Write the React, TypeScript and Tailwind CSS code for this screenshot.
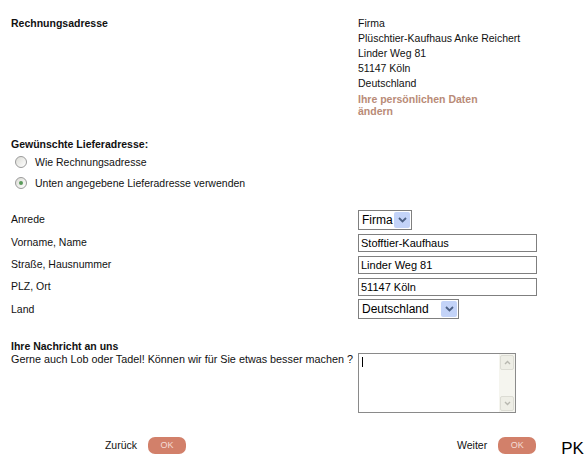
import React from "react";

const font = { fontFamily: '"Liberation Sans", Arial, sans-serif' };

function Radio({ checked }: { checked?: boolean }) {
  return (
    <span className="flex h-[12px] w-[12px] items-center justify-center rounded-full border border-[#9a9a9a] bg-gradient-to-br from-[#dcdcd6] to-white">
      {checked && <span className="h-[4px] w-[4px] rounded-full bg-[#5a9a5a]" />}
    </span>
  );
}

function Chevron() {
  return (
    <svg width="9" height="6" viewBox="0 0 9 6">
      <path d="M1 1 L4.5 4.5 L8 1" fill="none" stroke="#4d6185" strokeWidth="1.8" />
    </svg>
  );
}

function Select({ value, width }: { value: string; width: string }) {
  return (
    <div className={`flex h-[20px] items-stretch border border-[#7f7f7f] bg-white ${width}`}>
      <span className="flex-1 pl-[3px] text-[12px] leading-[18px] text-black">{value}</span>
      <span className="m-[1px] flex w-[16px] items-center justify-center rounded-[2px] bg-[#c3d3f8]">
        <Chevron />
      </span>
    </div>
  );
}

function Input({ value }: { value: string }) {
  return (
    <div className="h-[18px] w-[179px] border border-[#7f7f7f] bg-white pl-[2px] text-[11px] leading-[16px] text-black">
      {value}
    </div>
  );
}

function OkButton() {
  return (
    <button className="h-[17px] w-[38px] rounded-[7px] bg-[#d2806a] text-[9px] leading-[17px] text-[#f4ddd6]">
      OK
    </button>
  );
}

export default function App() {
  const rows = [
    { label: "Vorname, Name", value: "Stofftier-Kaufhaus" },
    { label: "Straße, Hausnummer", value: "Linder Weg 81" },
    { label: "PLZ, Ort", value: "51147 Köln" },
  ];

  return (
    <div className="relative h-[467px] w-[588px] overflow-hidden bg-white text-[10.5px] text-[#111]" style={font}>
      <div className="grid grid-cols-[347px_1fr] pl-[11px] pt-[16px]">
        <div className="font-bold leading-[15px]">Rechnungsadresse</div>
        <div className="flex flex-col leading-[15px]">
          <span>Firma</span>
          <span>Plüschtier-Kaufhaus Anke Reichert</span>
          <span>Linder Weg 81</span>
          <span>51147 Köln</span>
          <span>Deutschland</span>
          <span className="w-[150px] pt-[2px] font-bold leading-[12px] text-[#b98b77]">
            Ihre persönlichen Daten ändern
          </span>
        </div>
      </div>

      <div className="mt-[20px] pl-[11px]">
        <div className="font-bold leading-[15px]">Gewünschte Lieferadresse:</div>
        <div className="mt-[1px] flex items-center gap-[8px] pl-[4px] leading-[18px]">
          <Radio />
          <span>Wie Rechnungsadresse</span>
        </div>
        <div className="mt-[3px] flex items-center gap-[8px] pl-[4px] leading-[18px]">
          <Radio checked />
          <span>Unten angegebene Lieferadresse verwenden</span>
        </div>
      </div>

      <div className="mt-[18px] grid grid-cols-[347px_1fr] gap-y-[4px] pl-[11px]">
        <div className="flex h-[20px] items-center">Anrede</div>
        <div>
          <Select value="Firma" width="w-[54px]" />
        </div>
        {rows.map((r) => (
          <React.Fragment key={r.label}>
            <div className="flex h-[18px] items-center">{r.label}</div>
            <Input value={r.value} />
          </React.Fragment>
        ))}
        <div className="flex h-[20px] items-center">Land</div>
        <div className="-mt-[1px]">
          <Select value="Deutschland" width="w-[101px]" />
        </div>
      </div>

      <div className="mt-[20px] pl-[11px]">
        <div className="font-bold leading-[13px]">Ihre Nachricht an uns</div>
        <div className="grid grid-cols-[347px_1fr]">
          <div className="whitespace-nowrap text-[10.8px] leading-[12px]">
            Gerne auch Lob oder Tadel! Können wir für Sie etwas besser machen ?
          </div>
          <div className="flex h-[60px] w-[158px] border border-[#8a8a8a] bg-white">
            <div className="flex-1 pl-[3px] pt-[3px]">
              <span className="block h-[10px] w-px bg-black" />
            </div>
            <div className="flex w-[16px] flex-col justify-between bg-[#f5f5ef] p-[1px]">
              <span className="flex h-[15px] items-center justify-center rounded-[2px] border border-[#dcdcd4] bg-[#eeeee6]">
                <svg width="7" height="5" viewBox="0 0 7 5">
                  <path d="M1 4 L3.5 1.5 L6 4" fill="none" stroke="#b8b8b0" strokeWidth="1.4" />
                </svg>
              </span>
              <span className="flex h-[15px] items-center justify-center rounded-[2px] border border-[#dcdcd4] bg-[#eeeee6]">
                <svg width="7" height="5" viewBox="0 0 7 5">
                  <path d="M1 1 L3.5 3.5 L6 1" fill="none" stroke="#b8b8b0" strokeWidth="1.4" />
                </svg>
              </span>
            </div>
          </div>
        </div>
      </div>

      <div className="mt-[24px] flex items-start">
        <div className="flex w-[347px] items-center justify-end gap-[11px] pr-[161px]">
          <span>Zurück</span>
          <OkButton />
        </div>
        <div className="flex flex-1 items-start gap-[11px] pl-[110px]">
          <span className="leading-[17px]">Weiter</span>
          <OkButton />
          <span className="ml-[14px] mt-[3px] text-[17px] leading-[17px] text-black">PK</span>
        </div>
      </div>
    </div>
  );
}
